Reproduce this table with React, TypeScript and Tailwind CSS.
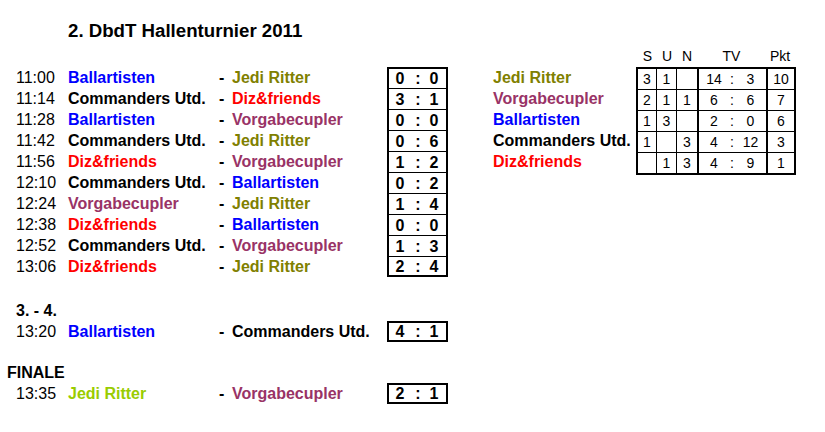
import React from "react";

type Team = "ball" | "jedi" | "diz" | "vorg" | "cmd" | "jediFinal";

const NAME: Record<Team, string> = {
  ball: "Ballartisten",
  jedi: "Jedi Ritter",
  jediFinal: "Jedi Ritter",
  diz: "Diz&friends",
  vorg: "Vorgabecupler",
  cmd: "Commanders Utd.",
};

const COLOR: Record<Team, string> = {
  ball: "text-[#0000ff]",
  jedi: "text-[#808000]",
  jediFinal: "text-[#99cc00]",
  diz: "text-[#ff0000]",
  vorg: "text-[#993366]",
  cmd: "text-black",
};

type Match = { t: string; h: Team; a: Team; s: [number, number] };

const matches: Match[] = [
  { t: "11:00", h: "ball", a: "jedi", s: [0, 0] },
  { t: "11:14", h: "cmd", a: "diz", s: [3, 1] },
  { t: "11:28", h: "ball", a: "vorg", s: [0, 0] },
  { t: "11:42", h: "cmd", a: "jedi", s: [0, 6] },
  { t: "11:56", h: "diz", a: "vorg", s: [1, 2] },
  { t: "12:10", h: "cmd", a: "ball", s: [0, 2] },
  { t: "12:24", h: "vorg", a: "jedi", s: [1, 4] },
  { t: "12:38", h: "diz", a: "ball", s: [0, 0] },
  { t: "12:52", h: "cmd", a: "vorg", s: [1, 3] },
  { t: "13:06", h: "diz", a: "jedi", s: [2, 4] },
];

type Row = { team: Team; s: string; u: string; n: string; f: string; ag: string; p: string };

const standings: Row[] = [
  { team: "jedi", s: "3", u: "1", n: "", f: "14", ag: "3", p: "10" },
  { team: "vorg", s: "2", u: "1", n: "1", f: "6", ag: "6", p: "7" },
  { team: "ball", s: "1", u: "3", n: "", f: "2", ag: "0", p: "6" },
  { team: "cmd", s: "1", u: "", n: "3", f: "4", ag: "12", p: "3" },
  { team: "diz", s: "", u: "1", n: "3", f: "4", ag: "9", p: "1" },
];

function MatchRow({
  m,
  box,
}: {
  m: Match;
  box: "first" | "mid" | "last" | "single";
}) {
  const boxCls =
    box === "first"
      ? "border-x-2 border-t-2"
      : box === "mid"
      ? "border-x-2 border-t"
      : box === "last"
      ? "border-x-2 border-t border-b-2"
      : "border-2";
  return (
    <div className="flex h-[21px] items-center leading-[21px]">
      <div className="w-[52px] pl-[16px] box-content text-black">{m.t}</div>
      <div className={`w-[150px] font-bold ${COLOR[m.h]}`}>{NAME[m.h]}</div>
      <div className="w-[14px] font-bold text-black pl-[1px]">-</div>
      <div className={`w-[155px] font-bold ${COLOR[m.a]}`}>{NAME[m.a]}</div>
      <div
        className={`flex h-[21px] w-[61px] items-center border-black font-bold text-black ${boxCls}`}
      >
        <span className="w-[22px] text-center">{m.s[0]}</span>
        <span className="w-[14px] text-center">:</span>
        <span className="w-[18px] text-center">{m.s[1]}</span>
      </div>
    </div>
  );
}

export default function App() {
  return (
    <div className="h-[432px] w-[825px] overflow-hidden bg-white font-['Liberation_Sans',Arial,sans-serif] text-[16px] text-black">
      <div className="mt-[20px] flex h-[22px] items-center pl-[68px] text-[18.67px] font-bold leading-[22px]">
        2. DbdT Hallenturnier 2011
      </div>

      <div className="mt-[4px] flex">
        {/* matches */}
        <div className="flex w-[492px] flex-col pt-[21px]">
          {matches.map((m, i) => (
            <MatchRow
              key={m.t}
              m={m}
              box={i === 0 ? "first" : i === matches.length - 1 ? "last" : "mid"}
            />
          ))}

          <div className="mt-[23px] flex h-[21px] items-center pl-[16px] font-bold leading-[21px]">
            3. - 4.
          </div>
          <MatchRow m={{ t: "13:20", h: "ball", a: "cmd", s: [4, 1] }} box="single" />

          <div className="mt-[20px] flex h-[21px] items-center pl-[7px] font-bold leading-[21px]">
            FINALE
          </div>
          <MatchRow m={{ t: "13:35", h: "jediFinal", a: "vorg", s: [2, 1] }} box="single" />
        </div>

        {/* standings */}
        <div className="flex flex-col">
          <div className="flex h-[21px] items-center text-[14px] leading-[21px]">
            <div className="w-[146px]" />
            <div className="w-[19px] text-center">S</div>
            <div className="w-[20px] text-center">U</div>
            <div className="w-[20px] text-center">N</div>
            <div className="w-[69px] text-center">TV</div>
            <div className="w-[28px] text-center">Pkt</div>
          </div>
          <div className="flex">
            <div className="flex w-[144px] flex-col">
              {standings.map((r) => (
                <div
                  key={r.team}
                  className={`flex h-[21px] items-center pl-[1px] font-bold leading-[21px] ${COLOR[r.team]}`}
                >
                  {NAME[r.team]}
                </div>
              ))}
            </div>
            <div className="flex w-[160px] flex-col border-2 border-black text-[14px]">
              {standings.map((r, i) => (
                <div
                  key={r.team}
                  className={`flex items-stretch ${
                    i === 0 ? "h-[20px]" : "h-[21px] border-t border-black"
                  }`}
                >
                  <div className="flex w-[19px] items-center justify-center border-r border-black">
                    {r.s}
                  </div>
                  <div className="flex w-[20px] items-center justify-center border-r border-black">
                    {r.u}
                  </div>
                  <div className="flex w-[20px] items-center justify-center">{r.n}</div>
                  <div className="flex w-[69px] items-center border-l-2 border-black">
                    <span className="w-[30px] text-center">{r.f}</span>
                    <span className="w-[6px] text-center">:</span>
                    <span className="w-[31px] text-center">{r.ag}</span>
                  </div>
                  <div className="flex w-[28px] items-center justify-center border-l-2 border-black">
                    {r.p}
                  </div>
                </div>
              ))}
            </div>
          </div>
        </div>
      </div>
    </div>
  );
}
